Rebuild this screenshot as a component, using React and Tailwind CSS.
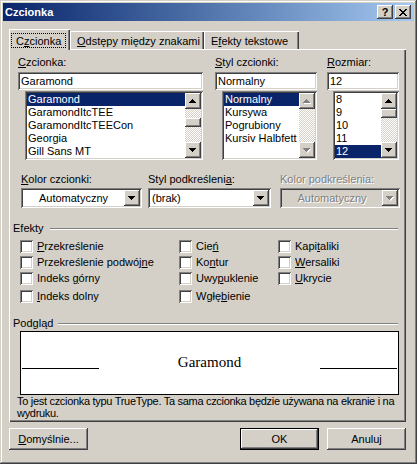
const UI = "font-['Liberation_Sans',Arial,sans-serif] text-[11px] leading-[13px]";
const raised =
  'shadow-[inset_-1px_-1px_0_#404040,inset_1px_1px_0_#ffffff,inset_-2px_-2px_0_#808080,inset_2px_2px_0_#d4d0c8]';
const sunken =
  'shadow-[inset_1px_1px_0_#808080,inset_-1px_-1px_0_#ffffff,inset_2px_2px_0_#404040,inset_-2px_-2px_0_#d4d0c8]';
const checker =
  'bg-[image:repeating-conic-gradient(#d4d0c8_0%_25%,#ffffff_0%_50%)] bg-[length:2px_2px]';

// small pixel triangle used on scroll / combo buttons
function Tri({ up = false, disabled = false }) {
  const down = 'M0 0h7v1H0zM1 1h5v1H1zM2 2h3v1H2zM3 3h1v1H3z';
  const upP = 'M3 0h1v1H3zM2 1h3v1H2zM1 2h5v1H1zM0 3h7v1H0z';
  const d = up ? upP : down;
  return (
    <svg width="8" height="5" viewBox="0 0 8 5" shapeRendering="crispEdges">
      {disabled && <path d={d} fill="#ffffff" transform="translate(1 1)" />}
      <path d={d} fill={disabled ? '#808080' : '#000000'} />
    </svg>
  );
}

function ScrollBtn({ up, disabled }) {
  return (
    <div className={`w-[16px] h-[16px] bg-[#d4d0c8] ${raised} flex items-center justify-center`}>
      <Tri up={up} disabled={disabled} />
    </div>
  );
}

function Scrollbar({ thumb, disabled }) {
  return (
    <div className="w-[16px] flex flex-col">
      <ScrollBtn up disabled={disabled} />
      <div className={`flex-1 ${checker}`}>{thumb}</div>
      <ScrollBtn disabled={disabled} />
    </div>
  );
}

function ListBox({ items, selected, thumb, disabled, className = '' }) {
  return (
    <div className={`h-[69px] bg-white p-[2px] flex ${sunken} ${className}`}>
      <div className="flex-1 flex flex-col">
        {items.map((it) => (
          <div
            key={it}
            className={`h-[13px] pl-[1px] whitespace-nowrap ${
              it === selected ? 'bg-[#0a246a] text-white' : ''
            }`}
          >
            {it}
          </div>
        ))}
      </div>
      <Scrollbar thumb={thumb} disabled={disabled} />
    </div>
  );
}

function Thumb({ className = '' }) {
  return <div className={`h-[9px] bg-[#d4d0c8] ${raised} ${className}`} />;
}

function TextBox({ value }) {
  return (
    <div className={`h-[18px] bg-white px-[3px] flex items-center ${sunken}`}>{value}</div>
  );
}

function Combo({ value, center, disabled }) {
  return (
    <div
      className={`h-[20px] p-[2px] flex ${sunken} ${disabled ? 'bg-[#d4d0c8]' : 'bg-white'}`}
    >
      <div
        className={`flex-1 flex items-center ${center ? 'justify-center' : 'pl-[2px]'} ${
          disabled ? 'text-[#808080] [text-shadow:1px_1px_0_#ffffff]' : ''
        }`}
      >
        {value}
      </div>
      <div className={`w-[16px] h-[16px] bg-[#d4d0c8] ${raised} flex items-center justify-center`}>
        <Tri disabled={disabled} />
      </div>
    </div>
  );
}

function Check({ children }) {
  return (
    <div className="flex items-start gap-[4px]">
      <div className={`w-[13px] h-[13px] bg-white shrink-0 ${sunken}`} />
      <span className="whitespace-nowrap">{children}</span>
    </div>
  );
}

function Group({ title, lineW }) {
  return (
    <div className="h-[13px] ml-[4px] w-[385px] flex items-center justify-between">
      <span>{title}</span>
      <div className={`h-[2px] border-t border-t-[#808080] border-b border-b-white ${lineW}`} />
    </div>
  );
}

function Btn({ children, def, className = '' }) {
  return (
    <div
      className={`w-[79px] h-[22px] bg-[#d4d0c8] flex items-center justify-center ${
        def
          ? 'shadow-[inset_0_0_0_1px_#000000,inset_-2px_-2px_0_#404040,inset_2px_2px_0_#ffffff,inset_-3px_-3px_0_#808080]'
          : raised
      } ${className}`}
    >
      {children}
    </div>
  );
}

function CapBtn({ children }) {
  return (
    <div
      className={`w-[16px] h-[14px] bg-[#d4d0c8] ${raised} flex items-center justify-center font-bold text-black`}
    >
      {children}
    </div>
  );
}

export default function App() {
  const fonts = ['Garamond', 'GaramondItcTEE', 'GaramondItcTEECon', 'Georgia', 'Gill Sans MT'];
  const styles = ['Normalny', 'Kursywa', 'Pogrubiony', 'Kursiv Halbfett'];
  const sizes = ['8', '9', '10', '11', '12'];

  return (
    <div
      className={`w-[417px] h-[464px] bg-[#d4d0c8] p-[3px] text-black ${UI} shadow-[inset_-1px_-1px_0_#404040,inset_1px_1px_0_#d4d0c8,inset_-2px_-2px_0_#808080,inset_2px_2px_0_#ffffff]`}
    >
      {/* Title bar */}
      <div className="h-[18px] flex items-center bg-linear-to-r from-[#0a246a] to-[#a6caf0] pl-[2px] pr-[3px]">
        <span className="font-bold text-white">Czcionka</span>
        <div className="ml-auto flex gap-[2px]">
          <CapBtn>?</CapBtn>
          <CapBtn>
            <svg width="8" height="7" viewBox="0 0 8 7" shapeRendering="crispEdges">
              <path
                d="M0 0h2v1H0zM6 0h2v1H6zM1 1h2v1H1zM5 1h2v1H5zM2 2h4v1H2zM3 3h2v1H3zM2 4h4v1H2zM1 5h2v1H1zM5 5h2v1H5zM0 6h2v1H0zM6 6h2v1H6z"
                fill="#000"
              />
            </svg>
          </CapBtn>
        </div>
      </div>

      <div className="pl-[6px] pt-[8px]">
        {/* Tabs */}
        <div className="flex items-end h-[20px]">
          <div className="relative z-10 w-[61px] h-[21px] -mb-px bg-[#d4d0c8] pl-[2px] pt-[4px] shadow-[inset_1px_1px_0_#ffffff,inset_-1px_0_0_#404040,inset_-2px_0_0_#808080]">
            <div className="w-[55px] h-[15px] border border-dotted border-black pl-[4px] pt-px">
              C<span className="underline">z</span>cionka
            </div>
          </div>
          <div className="w-[134px] h-[18px] pl-[7px] pt-[4px] shadow-[inset_1px_1px_0_#ffffff,inset_-1px_0_0_#404040,inset_-2px_0_0_#808080]">
            <span className="underline">O</span>dstępy między znakami
          </div>
          <div className="w-[95px] h-[18px] pl-[7px] pt-[4px] shadow-[inset_1px_1px_0_#ffffff,inset_-1px_0_0_#404040,inset_-2px_0_0_#808080]">
            E<span className="underline">f</span>ekty tekstowe
          </div>
        </div>

        {/* Panel */}
        <div className="w-[397px] h-[373px] pt-[7px] flex flex-col shadow-[inset_1px_1px_0_#ffffff,inset_-1px_-1px_0_#404040,inset_-2px_-2px_0_#808080]">
          {/* Font / style / size */}
          <div className="flex ml-[9px]">
            <div className="w-[185px]">
              <div className="h-[13px]">
                <span className="underline">C</span>zcionka:
              </div>
              <div className="mt-[3px]">
                <TextBox value="Garamond" />
              </div>
              <ListBox
                className="mt-px ml-[7px]"
                items={fonts}
                selected="Garamond"
                thumb={<Thumb className="mt-[9px]" />}
              />
            </div>
            <div className="w-[102px] ml-[12px]">
              <div className="h-[13px]">
                <span className="underline">S</span>tyl czcionki:
              </div>
              <div className="mt-[3px]">
                <TextBox value="Normalny" />
              </div>
              <ListBox
                className="mt-px ml-[7px]"
                items={styles}
                selected="Normalny"
                disabled
              />
            </div>
            <div className="w-[72px] ml-[10px]">
              <div className="h-[13px]">
                <span className="underline">R</span>ozmiar:
              </div>
              <div className="mt-[3px]">
                <TextBox value="12" />
              </div>
              <ListBox
                className="mt-px ml-[6px]"
                items={sizes}
                selected="12"
                thumb={<Thumb />}
              />
            </div>
          </div>

          {/* Colour / underline */}
          <div className="flex ml-[12px] mt-[13px]">
            <div className="w-[121px]">
              <div className="h-[13px]">
                <span className="underline">K</span>olor czcionki:
              </div>
              <div className="mt-[2px]">
                <Combo value="Automatyczny" center />
              </div>
            </div>
            <div className="w-[123px] ml-[6px]">
              <div className="h-[13px]">
                Styl podkreśleni<span className="underline">a</span>:
              </div>
              <div className="mt-[2px]">
                <Combo value="(brak)" />
              </div>
            </div>
            <div className="w-[120px] ml-[9px]">
              <div className="h-[13px] text-[#808080] [text-shadow:1px_1px_0_#ffffff]">
                Kolor podkreślenia:
              </div>
              <div className="mt-[2px]">
                <Combo value="Automatyczny" center disabled />
              </div>
            </div>
          </div>

          {/* Effects */}
          <div className="mt-[14px]">
            <Group title="Efekty" lineW="w-[348px]" />
          </div>
          <div className="mt-[5px] ml-[11px] flex flex-col">
            <div className="h-[16px] flex">
              <div className="w-[159px]">
                <Check>
                  <span className="underline">P</span>rzekreślenie
                </Check>
              </div>
              <div className="w-[99px]">
                <Check>
                  Cie<span className="underline">ń</span>
                </Check>
              </div>
              <Check>
                Kapi<span className="underline">t</span>aliki
              </Check>
            </div>
            <div className="h-[16px] flex">
              <div className="w-[159px]">
                <Check>
                  Przekreślenie podwój<span className="underline">n</span>e
                </Check>
              </div>
              <div className="w-[99px]">
                <Check>
                  Ko<span className="underline">n</span>tur
                </Check>
              </div>
              <Check>
                <span className="underline">W</span>ersaliki
              </Check>
            </div>
            <div className="h-[18px] flex">
              <div className="w-[159px]">
                <Check>
                  Indeks <span className="underline">g</span>órny
                </Check>
              </div>
              <div className="w-[99px]">
                <Check>
                  Uwy<span className="underline">p</span>uklenie
                </Check>
              </div>
              <Check>
                <span className="underline">U</span>krycie
              </Check>
            </div>
            <div className="h-[13px] flex">
              <div className="w-[159px]">
                <Check>
                  <span className="underline">I</span>ndeks dolny
                </Check>
              </div>
              <div className="w-[99px]">
                <Check>
                  Wgłę<span className="underline">b</span>ienie
                </Check>
              </div>
            </div>
          </div>

          {/* Preview */}
          <div className="mt-[14px]">
            <Group title="Podgląd" lineW="w-[340px]" />
          </div>
          <div className="mt-px ml-[11px] w-[379px] h-[64px] border border-black bg-white pt-[21px] px-px">
            <div className="flex items-start">
              <div className="w-[77px] h-px mt-[15px] bg-black" />
              <div className="flex-1 text-center font-['Liberation_Serif','Times_New_Roman',serif] text-[15px] leading-[18px]">
                Garamond
              </div>
              <div className="w-[77px] h-px mt-[15px] bg-black" />
            </div>
          </div>
          <div className="ml-[8px] leading-[12px] whitespace-nowrap tracking-[-0.3px]">
            To jest czcionka typu TrueType. Ta sama czcionka będzie używana na ekranie i na
            <br />
            wydruku.
          </div>
        </div>

        {/* Buttons */}
        <div className="flex mt-[6px]">
          <Btn>
            <span>
              <span className="underline">D</span>omyślnie...
            </span>
          </Btn>
          <Btn def className="ml-[152px]">
            OK
          </Btn>
          <Btn className="ml-[8px]">Anuluj</Btn>
        </div>
      </div>
    </div>
  );
}
